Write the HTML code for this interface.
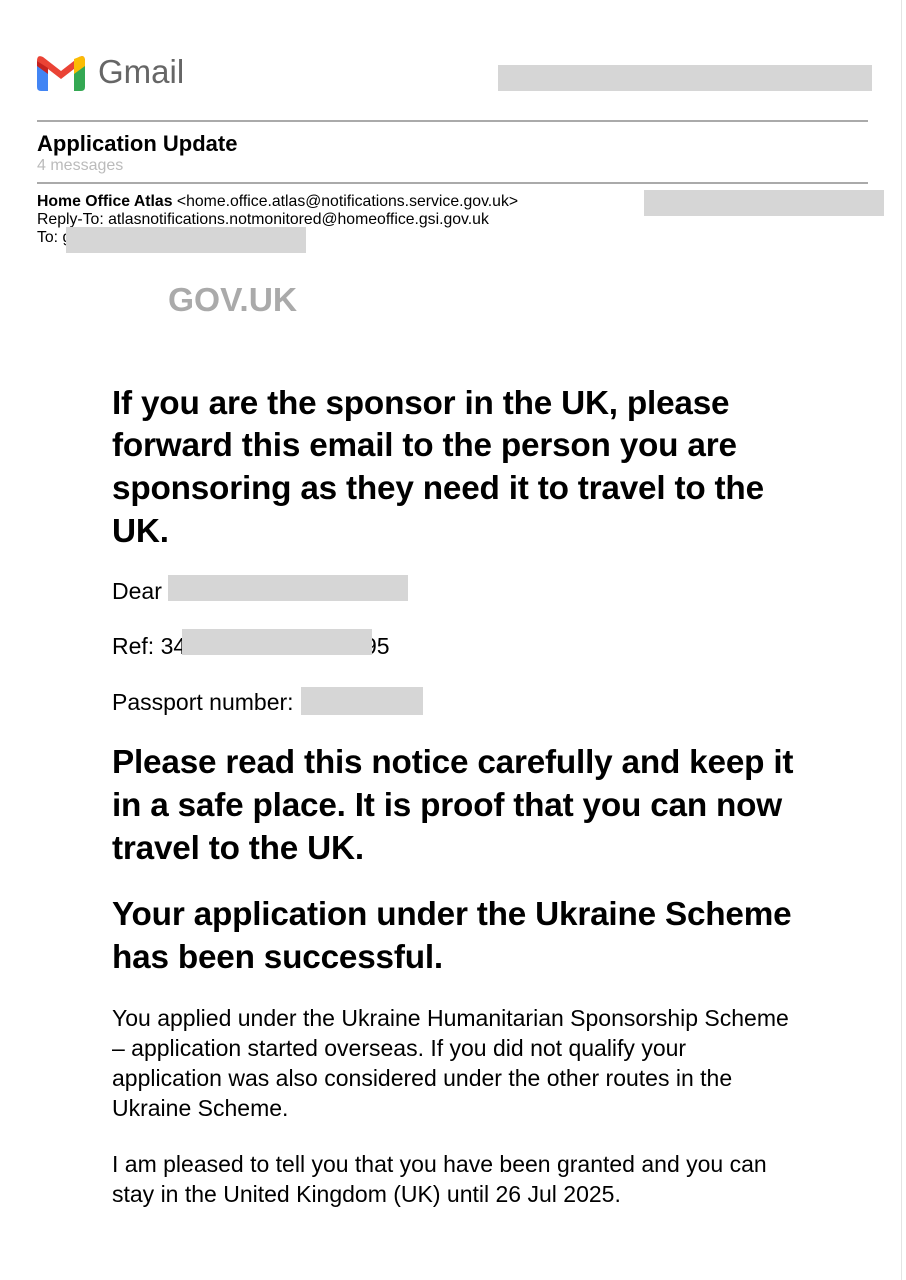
<!DOCTYPE html>
<html><head><meta charset="utf-8"><style>
html,body{margin:0;padding:0;background:#fff;}
body{width:906px;height:1280px;position:relative;overflow:hidden;font-family:"Liberation Sans",Arial,sans-serif;color:#000;}
.a{position:absolute;white-space:nowrap;}
.r{position:absolute;background:#d6d6d6;}
.h{font-weight:bold;font-size:33.3px;letter-spacing:-0.2px;}
.b{font-size:23px;}
.s{font-size:15.8px;letter-spacing:0px;}
</style></head><body>
<div style="position:absolute;left:901px;top:0;width:1px;height:1280px;background:#e4e4e4"></div>
<svg class="a" style="left:37px;top:55px" width="48" height="36" viewBox="0 0 48 36">
<path d="M0 6 L0 32 Q0 36 4 36 L11 36 L11 14 Z" fill="#4285f4"/>
<path d="M37 14 L37 36 L44 36 Q48 36 48 32 L48 6 Z" fill="#34a853"/>
<path d="M0 6 Q0 -1 6 2 L24 16 L42 2 Q48 -1 48 6 L37 14 L24 24 L11 14 Z" fill="#ea4335"/>
<path d="M37 4 L42 2 Q48 -1 48 6 L48 11 L37 19 Z" fill="#fbbc04"/>
<path d="M0 6 L0 11 L11 19 L11 13 Z" fill="#c5221f"/>
</svg>
<div class="a" style="left:98px;top:53px;font-size:33px;color:#666">Gmail</div>
<div class="r" style="left:498px;top:65px;width:374px;height:26px"></div>
<div class="a" style="left:37px;top:120px;width:831px;height:2px;background:#aaa"></div>
<div class="a" style="left:37px;top:131px;font-size:22px;font-weight:bold;letter-spacing:0px">Application Update</div>
<div class="a" style="left:37px;top:157px;font-size:16px;color:#bbb">4 messages</div>
<div class="a" style="left:37px;top:182px;width:831px;height:2px;background:#aaa"></div>
<div class="a s" style="left:37px;top:193px"><b>Home Office Atlas</b> &lt;home.office.atlas@notifications.service.gov.uk&gt;</div>
<div class="a s" style="left:37px;top:211px">Reply-To: atlasnotifications.notmonitored@homeoffice.gsi.gov.uk</div>
<div class="a s" style="left:37px;top:229px">To: g</div>
<div class="r" style="left:66px;top:227px;width:240px;height:26px"></div>
<div class="r" style="left:644px;top:190px;width:240px;height:26px"></div>
<div class="a" style="left:168px;top:282px;font-size:33.5px;font-weight:bold;color:#aaa">GOV.UK</div>
<div class="a h" style="left:112px;top:385px">If you are the sponsor in the UK, please</div>
<div class="a h" style="left:112px;top:427px">forward this email to the person you are</div>
<div class="a h" style="left:112px;top:470px">sponsoring as they need it to travel to the</div>
<div class="a h" style="left:112px;top:513px">UK.</div>
<div class="a b" style="left:112px;top:578px">Dear</div>
<div class="r" style="left:168px;top:575px;width:240px;height:26px"></div>
<div class="a b" style="left:112px;top:633px">Ref: 34</div>
<div class="a b" style="left:364px;top:633px">95</div>
<div class="r" style="left:182px;top:629px;width:190px;height:26px"></div>
<div class="a b" style="left:112px;top:689px">Passport number:</div>
<div class="r" style="left:301px;top:687px;width:122px;height:28px"></div>
<div class="a h" style="left:112px;top:744px">Please read this notice carefully and keep it</div>
<div class="a h" style="left:112px;top:787px">in a safe place. It is proof that you can now</div>
<div class="a h" style="left:112px;top:830px">travel to the UK.</div>
<div class="a h" style="left:112px;top:896px">Your application under the Ukraine Scheme</div>
<div class="a h" style="left:112px;top:939px">has been successful.</div>
<div class="a b" style="left:112px;top:1005px">You applied under the Ukraine Humanitarian Sponsorship Scheme</div>
<div class="a b" style="left:112px;top:1035px">– application started overseas. If you did not qualify your</div>
<div class="a b" style="left:112px;top:1065px">application was also considered under the other routes in the</div>
<div class="a b" style="left:112px;top:1095px">Ukraine Scheme.</div>
<div class="a b" style="left:112px;top:1151px">I am pleased to tell you that you have been granted and you can</div>
<div class="a b" style="left:112px;top:1181px">stay in the United Kingdom (UK) until 26 Jul 2025.</div>
</body></html>
